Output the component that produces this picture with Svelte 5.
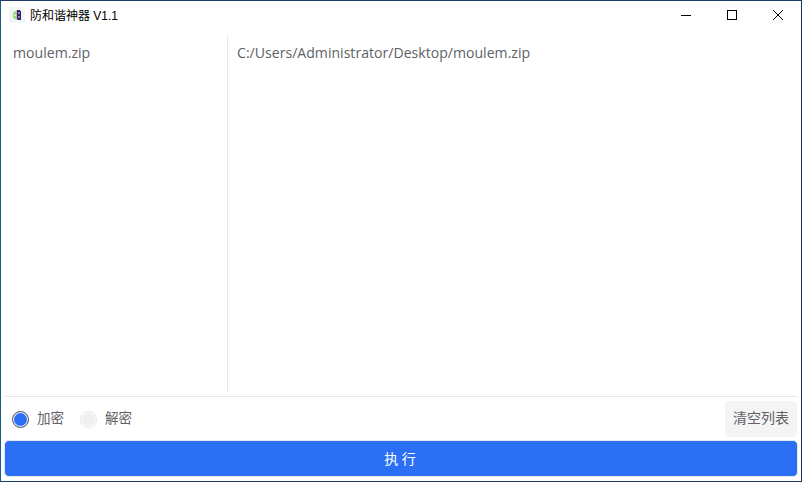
<script>
  let mode = $state('encrypt');
  const files = [{ name: 'moulem.zip', path: 'C:/Users/Administrator/Desktop/moulem.zip' }];
</script>

<div class="window">
  <header class="titlebar">
    <div class="app-icon">
      <svg width="16" height="16" viewBox="0 0 16 16">
        <rect width="16" height="16" fill="#f1f6f7" />
        <path d="M4 6l4-3v10l-4-2z" fill="#9bd86f" />
        <circle cx="6" cy="8" r="1" fill="#e9f6dc" />
        <path d="M8 3h3v1h1v9H9l-1-1z" fill="#3a1a72" />
        <rect x="9" y="5" width="2" height="2" fill="#a56be0" />
        <rect x="9" y="9" width="2" height="2" fill="#a56be0" />
      </svg>
    </div>
    <span class="title">防和谐神器 V1.1</span>
    <div class="controls">
      <span class="ctl">
        <svg width="12" height="12" viewBox="0 0 12 12"><path d="M1 6.5h10" stroke="#000" fill="none" /></svg>
      </span>
      <span class="ctl">
        <svg width="12" height="12" viewBox="0 0 12 12"><rect x="1.5" y="1.5" width="9" height="9" stroke="#000" fill="none" /></svg>
      </span>
      <span class="ctl">
        <svg width="12" height="12" viewBox="0 0 12 12"><path d="M1 1l10 10M11 1L1 11" stroke="#000" fill="none" /></svg>
      </span>
    </div>
  </header>

  <main class="panes">
    <ul class="names">
      {#each files as f}<li>{f.name}</li>{/each}
    </ul>
    <ul class="paths">
      {#each files as f}<li>{f.path}</li>{/each}
    </ul>
  </main>

  <div class="options">
    <label class="radio">
      <input type="radio" bind:group={mode} value="encrypt" />
      <span class="dot on"></span>
      <span class="label">加密</span>
    </label>
    <label class="radio">
      <input type="radio" bind:group={mode} value="decrypt" disabled />
      <span class="dot off"></span>
      <span class="label">解密</span>
    </label>
    <button class="clear">清空列表</button>
  </div>

  <button class="run">执 行</button>
</div>

<style>
  :global(body) {
    margin: 0;
    background: #fff;
  }
  .window {
    box-sizing: border-box;
    width: 802px;
    height: 482px;
    border: 1px solid #1b4a6b;
    border-top-color: #1a3a68;
    border-right-color: #1a2f5e;
    border-bottom-color: #1a3f62;
    border-left-color: #14607a;
    background: #fff;
    display: flex;
    flex-direction: column;
    font-family: "Open Sans", "Noto Sans CJK SC", sans-serif;
    color: #606266;
    font-size: 14px;
  }
  .titlebar {
    height: 28px;
    display: flex;
    align-items: center;
    flex: none;
  }
  .app-icon {
    margin-left: 8px;
    width: 16px;
    height: 16px;
    display: flex;
  }
  .title {
    margin-left: 5px;
    margin-bottom: 2px;
    font-family: "Liberation Sans", "Noto Sans CJK SC", sans-serif;
    font-size: 12px;
    color: #000;
  }
  .controls {
    margin-left: auto;
    display: flex;
  }
  .ctl {
    width: 46px;
    height: 28px;
    display: flex;
    align-items: center;
    justify-content: center;
  }
  .panes {
    height: 356px;
    margin-top: 6px;
    display: flex;
    flex: none;
  }
  ul {
    list-style: none;
    margin: 0;
    padding: 0;
  }
  li {
    line-height: 20px;
    margin-top: 8px;
    font-size: 14.1px;
  }
  .names {
    box-sizing: border-box;
    width: 227px;
    padding-left: 12px;
    border-right: 1px solid #e4e7ed;
  }
  .paths {
    padding-left: 9px;
  }
  .options {
    margin: 5px 4px 0;
    height: 41px;
    padding: 4px 0 0 7px;
    flex: none;
    box-sizing: border-box;
    border-top: 1px solid #e4e7ed;
    display: flex;
    align-items: center;
    gap: 16px;
  }
  .radio {
    display: flex;
    align-items: center;
    gap: 8px;
  }
  .label {
    font-size: 13.5px;
    margin-bottom: 5px;
  }
  .radio input {
    position: absolute;
    opacity: 0;
    width: 0;
    height: 0;
  }
  .dot {
    box-sizing: border-box;
    width: 17px;
    height: 17px;
    border-radius: 50%;
    display: block;
  }
  .dot.on {
    background: #2b6ff5;
    border: 1px solid #606266;
    box-shadow: inset 0 0 0 1px #fff;
  }
  .dot.off {
    background: #f0f0f0;
    border: 1px solid #e4e7ed;
    box-shadow: inset 0 0 0 1px #fff;
  }
  .clear {
    margin-left: auto;
    width: 72px;
    height: 36px;
    border: none;
    border-radius: 4px;
    background: #f4f4f5;
    color: #606266;
    font: inherit;
    padding: 0 0 5px;
  }
  .run {
    flex: none;
    margin: 3px 3px 0;
    height: 37px;
    border: 1px solid #e4e7ed;
    border-radius: 5px;
    background: #2b6ff5;
    color: #fff;
    font: inherit;
    padding: 0 2px 2px 0;
  }
</style>
